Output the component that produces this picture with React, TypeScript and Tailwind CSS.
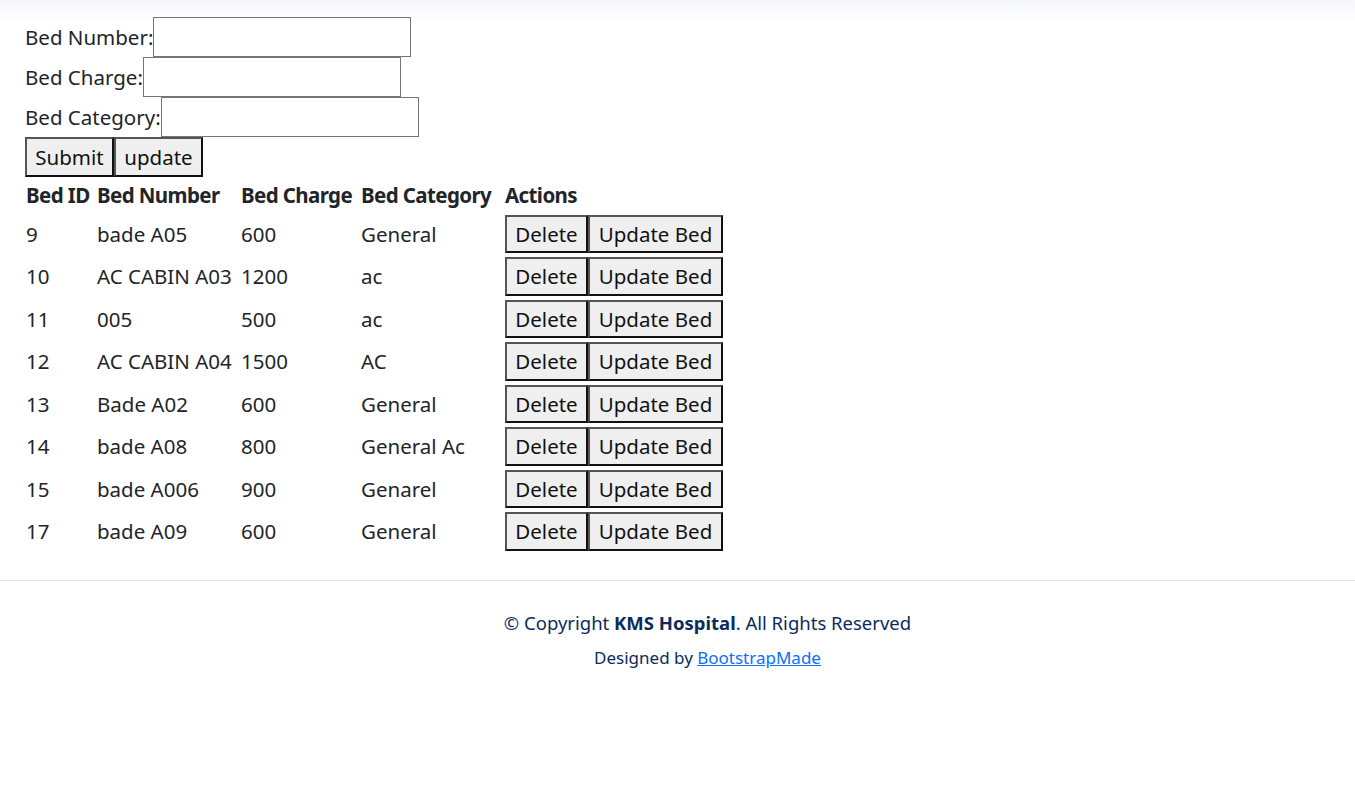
import React from 'react';

const beds = [
  { id: 9, number: 'bade A05', charge: 600, category: 'General' },
  { id: 10, number: 'AC CABIN A03', charge: 1200, category: 'ac' },
  { id: 11, number: '005', charge: 500, category: 'ac' },
  { id: 12, number: 'AC CABIN A04', charge: 1500, category: 'AC' },
  { id: 13, number: 'Bade A02', charge: 600, category: 'General' },
  { id: 14, number: 'bade A08', charge: 800, category: 'General Ac' },
  { id: 15, number: 'bade A006', charge: 900, category: 'Genarel' },
  { id: 17, number: 'bade A09', charge: 600, category: 'General' },
];

const btn =
  'shrink-0 px-[8px] bg-[#efefef] border-2 border-t-[#555] border-l-[#555] border-b-[#111] border-r-[#111] text-[#111]';

const App = () => {
  return (
    <div
      className="min-h-[796px] bg-[linear-gradient(to_bottom,#f5f6f8_0px,#ffffff_22px)] text-[#212529] text-[20.5px]"
      style={{ fontFamily: '"Segoe UI", "Noto Sans", sans-serif' }}
    >
      {/* Bed form */}
      <form className="pl-[25px] pt-[17px]">
        <div className="flex items-center h-[40px]">
          <label>Bed Number:</label>
          <input type="text" className="w-[258px] h-[40px] border border-[#767676] bg-white" />
        </div>
        <div className="flex items-center h-[40px]">
          <label>Bed Charge:</label>
          <input type="text" className="w-[258px] h-[40px] border border-[#767676] bg-white" />
        </div>
        <div className="flex items-center h-[40px]">
          <label>Bed Category:</label>
          <input type="text" className="w-[258px] h-[40px] border border-[#767676] bg-white" />
        </div>
        <div className="flex">
          <button type="submit" className={btn + ' h-[40px] w-[89px]'}>Submit</button>
          <button type="button" className={btn + ' h-[40px] w-[89px]'}>update</button>
        </div>
      </form>

      {/* Bed table */}
      <table className="ml-[23px] border-separate border-spacing-[2px] text-left">
        <thead>
          <tr className="h-[29px] whitespace-nowrap tracking-[-0.6px]">
            <th className="w-[69px] p-px font-bold">Bed ID</th>
            <th className="w-[142px] p-px font-bold">Bed Number</th>
            <th className="w-[118px] p-px font-bold">Bed Charge</th>
            <th className="w-[142px] p-px font-bold">Bed Category</th>
            <th className="w-[220px] p-px font-bold">Actions</th>
          </tr>
        </thead>
        <tbody>
          {beds.map((b) => (
            <tr key={b.id} className="whitespace-nowrap">
              <td className="p-px">{b.id}</td>
              <td className="p-px">{b.number}</td>
              <td className="p-px">{b.charge}</td>
              <td className="p-px">{b.category}</td>
              <td className="p-px">
                <div className="flex">
                  <button className={btn + ' h-[38.5px] w-[83px]'}>Delete</button>
                  <button className={btn + ' h-[38.5px] w-[135px]'}>Update Bed</button>
                </div>
              </td>
            </tr>
          ))}
        </tbody>
      </table>

      {/* Footer */}
      <footer className="mt-[26px] border-t border-[#dbe4f0] pt-[28px] pl-[60px] text-center text-[#0b2b5c]">
        <div className="text-[18.5px]">
          © Copyright <strong className="font-bold">KMS Hospital</strong>. All Rights Reserved
        </div>
        <div className="mt-[8px] text-[17px]">
          Designed by <a href="#" className="text-[#0d6efd] underline">BootstrapMade</a>
        </div>
      </footer>
    </div>
  );
};

export default App;
